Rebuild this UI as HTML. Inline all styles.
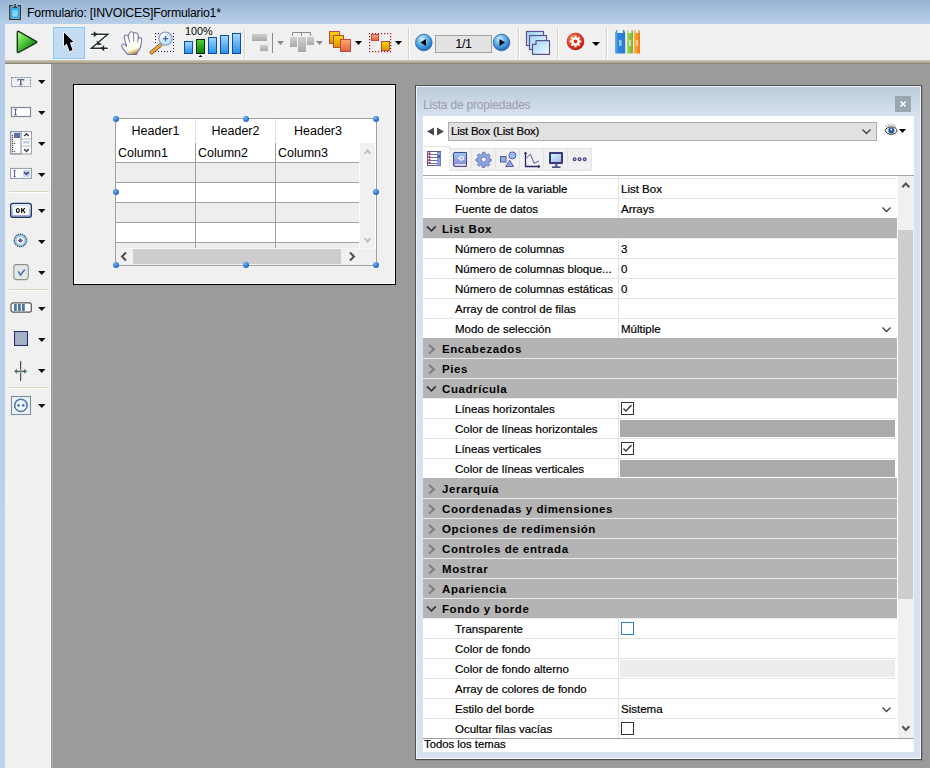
<!DOCTYPE html>
<html><head><meta charset="utf-8">
<style>
*{margin:0;padding:0;box-sizing:border-box}
html,body{width:930px;height:768px;overflow:hidden;background:#9b9b9b;font-family:"Liberation Sans",sans-serif;position:relative}
.a{position:absolute}
#title{left:0;top:0;width:930px;height:24px;background:linear-gradient(#98b3d2,#b8d0ea)}
#lframe{left:0;top:24px;width:5px;height:744px;background:linear-gradient(#b5cde8,#bcd4ee)}
#tb{left:5px;top:24px;width:925px;height:36px;background:#f0f0f0}
#khaki{left:5px;top:59px;width:925px;height:5px;background:linear-gradient(#f3f1ee 0,#f3f1ee 1px,#cbc6b5 1px,#bfbaa8 2px,#b4af9b 3px,#a9a590 4px,#88857a 4px)}
#ltb{left:5px;top:64px;width:46px;height:704px;background:#f0f0f0;border-right:1px solid #f6f6f6}
#lbord{left:51px;top:64px;width:2px;height:704px;background:linear-gradient(90deg,#949494 50%,#acacac 50%)}
.sep{width:2px;background:linear-gradient(90deg,#d9d3bf 50%,#fff 50%)}
.hsep{height:2px;background:linear-gradient(#d9d3bf 50%,#fff 50%)}
.tri{width:0;height:0;border-left:4px solid transparent;border-right:4px solid transparent;border-top:4px solid #000}
.ttxt{font-size:12.3px;letter-spacing:-0.23px;color:#000;white-space:nowrap}
.pn{left:455px;height:19px;line-height:21px;font-size:11.5px;color:#000;white-space:nowrap;-webkit-text-stroke:0.2px #000}
.pv{left:621px;height:19px;line-height:21px;font-size:11.5px;color:#000;white-space:nowrap;-webkit-text-stroke:0.2px #000}
.ph{left:442px;height:19px;line-height:20px;font-size:11.5px;font-weight:bold;letter-spacing:0.58px;color:#000;white-space:nowrap}
.lb{font-size:12.5px;color:#000;white-space:nowrap;line-height:17px}
.hdl{width:6.4px;height:6.4px;border-radius:50%;background:radial-gradient(circle at 35% 30%,#72b6f2,#2a78d4 55%,#174c98)}
</style></head><body>
<div id="title" class="a"></div>
<div class="a ttxt" style="left:27px;top:6px;line-height:14px">Formulario: [INVOICES]Formulario1*</div>
<div id="lframe" class="a"></div>
<div id="tb" class="a"></div>
<div id="khaki" class="a"></div>
<div id="ltb" class="a"></div>
<div id="lbord" class="a"></div>
<!-- TOP TOOLBAR ICONS -->
<svg class="a" style="left:10px;top:26px" width="36" height="32" viewBox="10 26 36 32">
<defs><linearGradient id="gplay" x1="0" y1="0.1" x2="0.8" y2="1"><stop offset="0" stop-color="#a4fc84"/><stop offset="0.4" stop-color="#5ad040"/><stop offset="0.75" stop-color="#1f9420"/><stop offset="1" stop-color="#0b5e0e"/></linearGradient></defs>
<path d="M18.6 31.4 Q17.3 30.8 17.3 32.4 L17.3 51.4 Q17.3 53 18.7 52.3 L36.2 42.8 Q37.4 42 36.2 41.3 Z" fill="url(#gplay)" stroke="#173a17" stroke-width="1.4" stroke-linejoin="round"/>
</svg>
<div class="a" style="left:53px;top:27px;width:32px;height:32px;background:#c3dcf2;border:1px solid #90c6f4"></div>
<svg class="a" style="left:53px;top:27px" width="32" height="32" viewBox="53 27 32 32">
<path d="M64 32.6 L64 46 L66.7 43.8 L69.5 51.3 L72.6 50.1 L69.9 42.8 L73.3 41.7 Z" fill="#fff" stroke="#fff" stroke-width="1.6" stroke-linejoin="round" opacity="0.9"/><path d="M64 32.6 L64 46 L66.7 43.8 L69.5 51.3 L72.6 50.1 L69.9 42.8 L73.3 41.7 Z" fill="#000"/>
</svg>
<svg class="a" style="left:86px;top:28px" width="26" height="26" viewBox="86 28 26 26">
<g stroke="#fff" stroke-width="3.4" fill="none" stroke-linecap="round" opacity="0.95"><path d="M91.2 34.3 L107.8 34.3 L91.4 48.3 L107.8 48.3"/></g>
<g stroke="#263030" stroke-width="1.5" fill="none"><path d="M91.2 34.3 L107.8 34.3 L91.4 48.3 L107.8 48.3"/></g>
<path d="M93.8 31.3 L97.8 34.3 L93.8 37.3 Z M104.2 45.3 L100.2 48.3 L104.2 51.3 Z M96.6 40.6 L97.6 45.2 L102 44.4 Z" fill="#263030"/>
</svg>
<svg class="a" style="left:114px;top:28px" width="30" height="30" viewBox="114 28 30 30">
<defs><linearGradient id="ghand" x1="0.45" y1="0.5" x2="0.6" y2="1"><stop offset="0" stop-color="#fffff2"/><stop offset="0.55" stop-color="#fdfbea"/><stop offset="0.85" stop-color="#d2ae60"/><stop offset="1" stop-color="#94681c"/></linearGradient></defs>
<path d="M127.6 54.4 Q124.5 51 122.2 47.6 Q121 45.6 122.3 44.4 Q123.8 43.4 125.2 44.7 L126.6 46.4 L124.2 37.6 Q123.9 35.4 125.8 35 Q127.6 34.8 128.2 36.4 L129.3 33.2 Q130.2 31.6 131.6 31.7 Q133.2 31.9 133.6 33.2 Q134.6 32.6 136.4 33 Q138.2 33.6 138.3 35.6 L138.5 38.6 Q139.4 37.4 140.8 37.8 Q141.9 38.4 141.7 40 L140.8 46 Q139.6 50.2 137.2 52.4 L136.8 54.4 Z" fill="url(#ghand)" stroke="#7472b4" stroke-width="1.05" stroke-linejoin="round"/>
<path d="M128.2 36.4 L129.8 42.6 M133.6 33.2 L133.8 41.6 M138.4 36 L137.6 42.6" fill="none" stroke="#7472b4" stroke-width="1"/>
</svg>
<svg class="a" style="left:146px;top:28px" width="30" height="30" viewBox="146 28 30 30">
<g fill="#1c1c52"><rect x="155" y="33" width="1" height="1"/><rect x="158" y="33" width="1" height="1"/><rect x="173" y="33" width="1" height="1"/><rect x="155" y="36" width="1" height="1"/><rect x="155" y="39" width="1" height="1"/><rect x="155" y="42" width="1" height="1"/><rect x="173" y="36" width="1" height="1"/><rect x="173" y="39" width="1" height="1"/><rect x="173" y="42" width="1" height="1"/><rect x="173" y="45" width="1" height="1"/><rect x="173" y="48" width="1" height="1"/><rect x="173" y="51" width="1" height="1"/><rect x="155" y="51" width="1" height="1"/><rect x="158" y="51" width="1" height="1"/><rect x="161" y="51" width="1" height="1"/><rect x="164" y="51" width="1" height="1"/><rect x="167" y="51" width="1" height="1"/><rect x="170" y="51" width="1" height="1"/></g>
<defs><radialGradient id="glens" cx="0.35" cy="0.3" r="0.8"><stop offset="0" stop-color="#ffffff"/><stop offset="0.5" stop-color="#cdeefe"/><stop offset="1" stop-color="#a8d8f4"/></radialGradient></defs>
<path d="M151.5 52.5 L160.5 45" stroke="#5a4a30" stroke-width="3.6" stroke-linecap="round"/>
<path d="M151.5 52.5 L160.5 45" stroke="#f5a332" stroke-width="2.6" stroke-linecap="round"/>
<circle cx="165.5" cy="38.6" r="6.6" fill="url(#glens)" stroke="#8a92c8" stroke-width="1.1"/>
<path d="M165.5 36 L165.5 41.2 M162.9 38.6 L168.1 38.6" stroke="#5a5a8e" stroke-width="1.3"/>
</svg>
<svg class="a" style="left:180px;top:25px" width="65" height="35" viewBox="180 25 65 35">
<defs><linearGradient id="gbar" x1="0" y1="0" x2="0" y2="1"><stop offset="0" stop-color="#a8d8ff"/><stop offset="1" stop-color="#2090ea"/></linearGradient>
<linearGradient id="gbarg" x1="0" y1="0" x2="0" y2="1"><stop offset="0" stop-color="#50d830"/><stop offset="1" stop-color="#0a7a10"/></linearGradient></defs>
<g stroke="#0b4fa8" stroke-width="1" fill="url(#gbar)">
<rect x="184.5" y="41.5" width="8" height="12"/><rect x="208.5" y="37.5" width="8" height="16"/><rect x="220.5" y="35.5" width="8" height="18"/><rect x="232.5" y="33.5" width="8" height="20"/></g>
<rect x="196.5" y="39.5" width="8" height="14" fill="url(#gbarg)" stroke="#0a2a0a"/>
<path d="M198.5 57 L200.5 55 L202.5 57 Z" fill="#000"/>
</svg>
<div class="a" style="left:185px;top:25px;font-size:10.8px;line-height:12px;color:#000">100%</div>
<div class="a sep" style="left:244px;top:28px;height:31px"></div>
<!-- align icons grayed -->
<svg class="a" style="left:248px;top:28px" width="80" height="30" viewBox="248 28 80 30">
<defs><linearGradient id="ggr" x1="0" y1="0" x2="0" y2="1"><stop offset="0" stop-color="#cfcfcf"/><stop offset="1" stop-color="#a9a9a9"/></linearGradient></defs>
<rect x="252" y="34" width="15" height="7" fill="url(#ggr)"/>
<rect x="260" y="45" width="8" height="6" fill="url(#ggr)"/>
<rect x="272" y="33" width="1" height="20" fill="#8a8a8a"/>
<path d="M277 41 L284 41 L280.5 45 Z" fill="#8a8a8a"/>
<path d="M292.5 36 L292.5 32.5 L310.5 32.5 L310.5 36 M301.5 32.5 L301.5 36" fill="none" stroke="#8a8a8a" stroke-width="1"/>
<rect x="290" y="37" width="7" height="10" fill="url(#ggr)"/>
<rect x="298" y="37" width="8" height="15" fill="url(#ggr)"/>
<rect x="307" y="37" width="7" height="8" fill="url(#ggr)"/>
<path d="M316 41 L323 41 L319.5 45 Z" fill="#8a8a8a"/>
</svg>
<svg class="a" style="left:325px;top:26px" width="85" height="32" viewBox="325 26 85 32">
<defs><linearGradient id="gyel" x1="0" y1="0" x2="0" y2="1"><stop offset="0" stop-color="#f8d800"/><stop offset="1" stop-color="#d89400"/></linearGradient>
<linearGradient id="gsal" x1="0" y1="0" x2="0" y2="1"><stop offset="0" stop-color="#fcaa78"/><stop offset="1" stop-color="#e0603a"/></linearGradient></defs>
<rect x="329.5" y="31.5" width="10" height="12" fill="url(#gyel)" stroke="#c04848" stroke-width="1"/>
<rect x="333.5" y="35.5" width="10" height="12" fill="url(#gyel)" stroke="#c04848" stroke-width="1"/>
<rect x="340.5" y="39.5" width="10" height="12" fill="url(#gsal)" stroke="#c04848" stroke-width="1"/>
<path d="M355 41 L362 41 L358.5 45 Z" fill="#000"/>
<g fill="#a01818"><rect x="369" y="33" width="1.2" height="1.2"/><rect x="372" y="33" width="1.2" height="1.2"/><rect x="375" y="33" width="1.2" height="1.2"/><rect x="378" y="33" width="1.2" height="1.2"/><rect x="381" y="33" width="1.2" height="1.2"/><rect x="384" y="33" width="1.2" height="1.2"/><rect x="387" y="33" width="1.2" height="1.2"/><rect x="390" y="33" width="1.2" height="1.2"/><rect x="369" y="36" width="1.2" height="1.2"/><rect x="369" y="39" width="1.2" height="1.2"/><rect x="369" y="42" width="1.2" height="1.2"/><rect x="369" y="45" width="1.2" height="1.2"/><rect x="369" y="48" width="1.2" height="1.2"/><rect x="369" y="51" width="1.2" height="1.2"/><rect x="372" y="51" width="1.2" height="1.2"/><rect x="375" y="51" width="1.2" height="1.2"/><rect x="378" y="51" width="1.2" height="1.2"/><rect x="390" y="36" width="1.2" height="1.2"/><rect x="390" y="39" width="1.2" height="1.2"/><rect x="390" y="42" width="1.2" height="1.2"/><rect x="390" y="45" width="1.2" height="1.2"/><rect x="390" y="48" width="1.2" height="1.2"/><rect x="390" y="51" width="1.2" height="1.2"/><rect x="381" y="51" width="1.2" height="1.2"/><rect x="384" y="51" width="1.2" height="1.2"/><rect x="387" y="51" width="1.2" height="1.2"/></g>
<rect x="371.5" y="34.5" width="7" height="6" fill="url(#gsal)" stroke="#c04848" stroke-width="1"/>
<rect x="381.5" y="41.5" width="8" height="9" fill="url(#gyel)" stroke="#c04848" stroke-width="1"/>
<path d="M395 41 L402 41 L398.5 45 Z" fill="#000"/>
</svg>
<div class="a sep" style="left:408px;top:28px;height:31px"></div>
<svg class="a" style="left:412px;top:30px" width="102" height="26" viewBox="412 30 102 26">
<defs><radialGradient id="gnav" cx="0.4" cy="0.3" r="0.75"><stop offset="0" stop-color="#d8f0ff"/><stop offset="0.45" stop-color="#5cb0ec"/><stop offset="1" stop-color="#1660b8"/></radialGradient></defs>
<circle cx="423.8" cy="42.5" r="8.3" fill="url(#gnav)" stroke="#2a5a9a" stroke-width="0.8"/>
<path d="M420.5 42.5 L426 39 L426 46 Z" fill="#000"/>
<circle cx="501.5" cy="42.5" r="8.3" fill="url(#gnav)" stroke="#2a5a9a" stroke-width="0.8"/>
<path d="M505 42.5 L499.5 39 L499.5 46 Z" fill="#000"/>
</svg>
<div class="a" style="left:435px;top:35px;width:57px;height:18px;background:#e2e2e2;border:1px solid #a0a0a0"></div>
<div class="a" style="left:435px;top:35px;width:57px;height:18px;font-size:12.6px;letter-spacing:-0.3px;line-height:18px;text-align:center;color:#000">1/1</div>
<div class="a sep" style="left:518px;top:28px;height:31px"></div>
<svg class="a" style="left:520px;top:26px" width="36" height="32" viewBox="520 26 36 32">
<defs><linearGradient id="gpg" x1="0" y1="0" x2="1" y2="1"><stop offset="0" stop-color="#a0d4f0"/><stop offset="1" stop-color="#f0fcff"/></linearGradient></defs>
<rect x="526.5" y="31.5" width="17" height="14" fill="url(#gpg)" stroke="#5a5294" stroke-width="1.2"/>
<rect x="529.5" y="35.5" width="17" height="14" fill="url(#gpg)" stroke="#5a5294" stroke-width="1.2"/>
<path d="M532.5 44.3 L536 44.3 L536 40.7 L549.5 40.7 L549.5 54.3 L532.5 54.3 Z" fill="url(#gpg)" stroke="#5a5294" stroke-width="1.2" stroke-linejoin="round"/>
</svg>
<div class="a sep" style="left:557px;top:28px;height:31px"></div>
<svg class="a" style="left:562px;top:28px" width="28" height="28" viewBox="562 28 28 28">
<defs><radialGradient id="gred" cx="0.35" cy="0.3" r="0.8"><stop offset="0" stop-color="#ff8a50"/><stop offset="0.6" stop-color="#e23a1a"/><stop offset="1" stop-color="#b80c0c"/></radialGradient></defs>
<circle cx="575.5" cy="41.5" r="8.4" fill="url(#gred)" stroke="#a01010" stroke-width="0.6"/>
<g fill="#fff" transform="translate(575.5 41.5)">
<circle r="4.2"/>
<rect x="-1" y="-5.8" width="2" height="11.6"/><rect x="-5.8" y="-1" width="11.6" height="2"/>
<rect x="-1" y="-5.8" width="2" height="11.6" transform="rotate(45)"/><rect x="-5.8" y="-1" width="11.6" height="2" transform="rotate(45)"/>
</g>
<circle cx="575.5" cy="41.5" r="1.9" fill="#d83a1c"/>
</svg>
<path/>
<div class="a tri" style="left:592px;top:42px"></div>
<div class="a sep" style="left:606px;top:28px;height:31px"></div>
<svg class="a" style="left:612px;top:28px" width="32" height="28" viewBox="612 28 32 28">
<defs><linearGradient id="gbb" x1="0" y1="0" x2="1" y2="0"><stop offset="0" stop-color="#6ab4f4"/><stop offset="0.3" stop-color="#2e84dc"/><stop offset="1" stop-color="#2a78d0"/></linearGradient>
<linearGradient id="gbg" x1="0" y1="0" x2="1" y2="0"><stop offset="0" stop-color="#a8d860"/><stop offset="1" stop-color="#78b030"/></linearGradient>
<linearGradient id="gbo" x1="0" y1="0" x2="1" y2="0"><stop offset="0" stop-color="#ffb050"/><stop offset="1" stop-color="#f27a08"/></linearGradient></defs>
<path d="M615 53.5 L615 33 L616.3 30 L617.3 30 L617.3 33 L623 33 L623 30 L624 30 L625.2 33 L625.2 53.5 Z" fill="url(#gbb)"/>
<path d="M627 53.5 L627 33 L627.5 30 L628.5 30 L628.5 33 L631.5 33 L631.5 30 L632.5 30 L633 33 L633 53.5 Z" fill="url(#gbg)"/>
<path d="M633.8 53.5 L633.8 33 L634.3 30 L635.3 30 L635.3 33 L638.5 33 L638.5 30 L639.5 30 L640 33 L640 53.5 Z" fill="url(#gbo)"/>
<g fill="#fff" opacity="0.55"><rect x="619" y="40" width="2.5" height="6"/><rect x="629" y="40" width="2" height="6"/><rect x="636" y="40" width="2" height="6"/></g>
</svg>


<!-- FORM -->
<div class="a" style="left:73px;top:84px;width:323px;height:201px;border:1px solid #000;background:#f0f0f0;box-shadow:inset 1px 1px 0 #fff,inset -1px -1px 0 #fff"></div>
<!-- LISTBOX -->
<div class="a" style="left:115px;top:118px;width:262px;height:148px;border:1px solid #a0a0a0;background:#fff"></div>
<div class="a" style="left:116px;top:163px;width:243px;height:19px;background:#eeeeee"></div>
<div class="a" style="left:116px;top:203px;width:243px;height:19px;background:#eeeeee"></div>
<div class="a" style="left:116px;top:243px;width:243px;height:5px;background:#eeeeee"></div>
<div class="a" style="left:116px;top:162px;width:243px;height:1px;background:#a0a0a0"></div>
<div class="a" style="left:116px;top:182px;width:243px;height:1px;background:#a0a0a0"></div>
<div class="a" style="left:116px;top:202px;width:243px;height:1px;background:#a0a0a0"></div>
<div class="a" style="left:116px;top:222px;width:243px;height:1px;background:#a0a0a0"></div>
<div class="a" style="left:116px;top:242px;width:243px;height:1px;background:#a0a0a0"></div>
<div class="a" style="left:195px;top:119px;width:1px;height:24px;background:#e3e3e3"></div>
<div class="a" style="left:275px;top:119px;width:1px;height:24px;background:#e3e3e3"></div>
<div class="a" style="left:195px;top:143px;width:1px;height:105px;background:#a0a0a0"></div>
<div class="a" style="left:275px;top:143px;width:1px;height:105px;background:#a0a0a0"></div>
<div class="a" style="left:360px;top:143px;width:15px;height:105px;background:#f0f0f0"></div>
<div class="a" style="left:116px;top:248px;width:260px;height:1px;background:#f8f8f8"></div>
<div class="a" style="left:116px;top:249px;width:260px;height:16px;background:#f0f0f0"></div>
<div class="a" style="left:133px;top:249px;width:208px;height:15px;background:#cdcdcd"></div>
<svg class="a" style="left:119px;top:251px" width="10" height="11"><path d="M7 1.5 L3 5.5 L7 9.5" fill="none" stroke="#4d4d4d" stroke-width="2"/></svg>
<svg class="a" style="left:347px;top:251px" width="10" height="11"><path d="M3 1.5 L7 5.5 L3 9.5" fill="none" stroke="#4d4d4d" stroke-width="2"/></svg>
<svg class="a" style="left:362px;top:146px" width="12" height="10"><path d="M2.6 7.8 L5.5 4.3 L8.4 7.8" fill="none" stroke="#c0c0c0" stroke-width="2"/></svg>
<svg class="a" style="left:362px;top:236px" width="12" height="9"><path d="M2.6 2.2 L5.5 5.7 L8.4 2.2" fill="none" stroke="#c0c0c0" stroke-width="2"/></svg>
<div class="a lb" style="left:116px;top:123px;width:79px;text-align:center">Header1</div>
<div class="a lb" style="left:196px;top:123px;width:79px;text-align:center">Header2</div>
<div class="a lb" style="left:276px;top:123px;width:84px;text-align:center">Header3</div>
<div class="a lb" style="left:118px;top:145px">Column1</div>
<div class="a lb" style="left:198px;top:145px">Column2</div>
<div class="a lb" style="left:278px;top:145px">Column3</div>
<div class="a hdl" style="left:112.8px;top:115.8px"></div>
<div class="a hdl" style="left:242.8px;top:115.8px"></div>
<div class="a hdl" style="left:372.8px;top:115.8px"></div>
<div class="a hdl" style="left:112.8px;top:188.8px"></div>
<div class="a hdl" style="left:372.8px;top:188.8px"></div>
<div class="a hdl" style="left:112.8px;top:261.8px"></div>
<div class="a hdl" style="left:242.8px;top:261.8px"></div>
<div class="a hdl" style="left:372.8px;top:261.8px"></div>

<!-- PANEL -->
<div class="a" style="left:415px;top:85px;width:507px;height:675px;border:1px solid #505050;background:linear-gradient(#bdcbdb 1px,#d6e2ef 30px,#d6e2ef);box-shadow:inset 1px 1px 0 #eef4fa,inset -1px -1px 0 #f4f8fc,1px 1px 0 #8a8a8a"></div>
<div class="a" style="left:423px;top:116px;width:491px;height:636px;background:#fff"></div>
<div class="a" style="left:423px;top:98px;font-size:12px;letter-spacing:-0.2px;line-height:15px;color:#9d9aae;white-space:nowrap">Lista de propiedades</div>
<div class="a" style="left:895px;top:96px;width:16px;height:16px;background:#9aa6b2"></div>
<svg class="a" style="left:895px;top:96px" width="16" height="16"><path d="M5.5 5.5 L10.5 10.5 M10.5 5.5 L5.5 10.5" stroke="#fff" stroke-width="1.6"/></svg>
<svg class="a" style="left:426px;top:126px" width="20" height="11"><path d="M1 5.5 L8 1.5 L8 9.5 Z M11 1.5 L18 5.5 L11 9.5 Z" fill="#4a4a4a"/></svg>
<div class="a" style="left:448px;top:122px;width:429px;height:19px;border:1px solid #adadad;background:#e1e1e1"></div>
<div class="a" style="left:451px;top:122px;height:19px;line-height:19px;font-size:11.3px;letter-spacing:-0.15px;white-space:nowrap;-webkit-text-stroke:0.2px #000">List Box (List Box)</div>
<svg class="a" style="left:861px;top:128px" width="12" height="8"><path d="M1.5 1.5 L5.5 5.5 L9.5 1.5" fill="none" stroke="#404040" stroke-width="1.3"/></svg>
<!-- tabs -->
<div class="a" style="left:423px;top:146px;width:27px;height:25px;background:#fff;border-top:1px solid #e3e3e3;border-right:1px solid #e3e3e3"></div>
<div class="a" style="left:449px;top:148px;width:143px;height:23px;background:#f0f0f0;border:1px solid #e3e3e3;border-left:none"></div>
<div class="a" style="left:471px;top:148px;width:1px;height:23px;background:#e3e3e3"></div>
<div class="a" style="left:495px;top:148px;width:1px;height:23px;background:#e3e3e3"></div>
<div class="a" style="left:519px;top:148px;width:1px;height:23px;background:#e3e3e3"></div>
<div class="a" style="left:543px;top:148px;width:1px;height:23px;background:#e3e3e3"></div>
<div class="a" style="left:567px;top:148px;width:1px;height:23px;background:#e3e3e3"></div>
<div class="a" style="left:423px;top:175px;width:491px;height:1px;background:#a8a8a8"></div>
<div class="a" style="left:423px;top:178px;width:474px;height:1px;background:#e3e3e3"></div>
<div class="a" style="left:618px;top:176px;width:1px;height:2px;background:#e3e3e3"></div>
<!-- scrollbar -->
<div class="a" style="left:898px;top:176px;width:16px;height:562px;background:#f0f0f0"></div>
<div class="a" style="left:898px;top:230px;width:15px;height:369px;background:#cdcdcd"></div>
<svg class="a" style="left:900px;top:180px" width="12" height="10"><path d="M2.3 7.3 L5.8 3.6 L9.3 7.3" fill="none" stroke="#555" stroke-width="2.1"/></svg>
<svg class="a" style="left:900px;top:723px" width="12" height="10"><path d="M2.3 3.2 L5.8 6.9 L9.3 3.2" fill="none" stroke="#555" stroke-width="2.1"/></svg>
<div class="a" style="left:423px;top:198px;width:474px;height:1px;background:#e3e3e3"></div>
<div class="a" style="left:618px;top:179px;width:1px;height:19px;background:#e3e3e3"></div>
<div class="a" style="left:423px;top:218px;width:474px;height:1px;background:#e3e3e3"></div>
<div class="a" style="left:618px;top:199px;width:1px;height:19px;background:#e3e3e3"></div>
<div class="a" style="left:423px;top:258px;width:474px;height:1px;background:#e3e3e3"></div>
<div class="a" style="left:618px;top:239px;width:1px;height:19px;background:#e3e3e3"></div>
<div class="a" style="left:423px;top:278px;width:474px;height:1px;background:#e3e3e3"></div>
<div class="a" style="left:618px;top:259px;width:1px;height:19px;background:#e3e3e3"></div>
<div class="a" style="left:423px;top:298px;width:474px;height:1px;background:#e3e3e3"></div>
<div class="a" style="left:618px;top:279px;width:1px;height:19px;background:#e3e3e3"></div>
<div class="a" style="left:423px;top:318px;width:474px;height:1px;background:#e3e3e3"></div>
<div class="a" style="left:618px;top:299px;width:1px;height:19px;background:#e3e3e3"></div>
<div class="a" style="left:423px;top:338px;width:474px;height:1px;background:#e3e3e3"></div>
<div class="a" style="left:618px;top:319px;width:1px;height:19px;background:#e3e3e3"></div>
<div class="a" style="left:423px;top:418px;width:474px;height:1px;background:#e3e3e3"></div>
<div class="a" style="left:618px;top:399px;width:1px;height:19px;background:#e3e3e3"></div>
<div class="a" style="left:423px;top:438px;width:474px;height:1px;background:#e3e3e3"></div>
<div class="a" style="left:618px;top:419px;width:1px;height:19px;background:#e3e3e3"></div>
<div class="a" style="left:423px;top:458px;width:474px;height:1px;background:#e3e3e3"></div>
<div class="a" style="left:618px;top:439px;width:1px;height:19px;background:#e3e3e3"></div>
<div class="a" style="left:423px;top:478px;width:474px;height:1px;background:#e3e3e3"></div>
<div class="a" style="left:618px;top:459px;width:1px;height:19px;background:#e3e3e3"></div>
<div class="a" style="left:423px;top:638px;width:474px;height:1px;background:#e3e3e3"></div>
<div class="a" style="left:618px;top:619px;width:1px;height:19px;background:#e3e3e3"></div>
<div class="a" style="left:423px;top:658px;width:474px;height:1px;background:#e3e3e3"></div>
<div class="a" style="left:618px;top:639px;width:1px;height:19px;background:#e3e3e3"></div>
<div class="a" style="left:423px;top:678px;width:474px;height:1px;background:#e3e3e3"></div>
<div class="a" style="left:618px;top:659px;width:1px;height:19px;background:#e3e3e3"></div>
<div class="a" style="left:423px;top:698px;width:474px;height:1px;background:#e3e3e3"></div>
<div class="a" style="left:618px;top:679px;width:1px;height:19px;background:#e3e3e3"></div>
<div class="a" style="left:423px;top:718px;width:474px;height:1px;background:#e3e3e3"></div>
<div class="a" style="left:618px;top:699px;width:1px;height:19px;background:#e3e3e3"></div>
<div class="a" style="left:618px;top:719px;width:1px;height:19px;background:#e3e3e3"></div>
<div class="a" style="left:423px;top:218px;width:474px;height:20px;background:#b4b4b4"></div>
<div class="a" style="left:423px;top:338px;width:474px;height:20px;background:#b4b4b4"></div>
<div class="a" style="left:423px;top:358px;width:474px;height:20px;background:#b4b4b4"></div>
<div class="a" style="left:423px;top:378px;width:474px;height:20px;background:#b4b4b4"></div>
<div class="a" style="left:423px;top:478px;width:474px;height:20px;background:#b4b4b4"></div>
<div class="a" style="left:423px;top:498px;width:474px;height:20px;background:#b4b4b4"></div>
<div class="a" style="left:423px;top:518px;width:474px;height:20px;background:#b4b4b4"></div>
<div class="a" style="left:423px;top:538px;width:474px;height:20px;background:#b4b4b4"></div>
<div class="a" style="left:423px;top:558px;width:474px;height:20px;background:#b4b4b4"></div>
<div class="a" style="left:423px;top:578px;width:474px;height:20px;background:#b4b4b4"></div>
<div class="a" style="left:423px;top:598px;width:474px;height:20px;background:#b4b4b4"></div>
<div class="a" style="left:423px;top:238px;width:474px;height:1px;background:#ebebeb"></div>
<div class="a" style="left:423px;top:358px;width:474px;height:1px;background:#ebebeb"></div>
<div class="a" style="left:423px;top:378px;width:474px;height:1px;background:#ebebeb"></div>
<div class="a" style="left:423px;top:398px;width:474px;height:1px;background:#ebebeb"></div>
<div class="a" style="left:423px;top:498px;width:474px;height:1px;background:#ebebeb"></div>
<div class="a" style="left:423px;top:518px;width:474px;height:1px;background:#ebebeb"></div>
<div class="a" style="left:423px;top:538px;width:474px;height:1px;background:#ebebeb"></div>
<div class="a" style="left:423px;top:558px;width:474px;height:1px;background:#ebebeb"></div>
<div class="a" style="left:423px;top:578px;width:474px;height:1px;background:#ebebeb"></div>
<div class="a" style="left:423px;top:598px;width:474px;height:1px;background:#ebebeb"></div>
<div class="a" style="left:423px;top:618px;width:474px;height:1px;background:#ebebeb"></div>
<div class="a pn" style="top:179px">Nombre de la variable</div>
<div class="a pv" style="top:179px">List Box</div>
<div class="a pn" style="top:199px">Fuente de datos</div>
<div class="a pv" style="top:199px">Arrays</div>
<div class="a ph" style="top:219px">List Box</div>
<div class="a pn" style="top:239px">Número de columnas</div>
<div class="a pv" style="top:239px">3</div>
<div class="a pn" style="top:259px">Número de columnas bloque...</div>
<div class="a pv" style="top:259px">0</div>
<div class="a pn" style="top:279px">Número de columnas estáticas</div>
<div class="a pv" style="top:279px">0</div>
<div class="a pn" style="top:299px">Array de control de filas</div>
<div class="a pn" style="top:319px">Modo de selección</div>
<div class="a pv" style="top:319px">Múltiple</div>
<div class="a ph" style="top:339px">Encabezados</div>
<div class="a ph" style="top:359px">Pies</div>
<div class="a ph" style="top:379px">Cuadrícula</div>
<div class="a pn" style="top:399px">Líneas horizontales</div>
<div class="a pn" style="top:419px">Color de líneas horizontales</div>
<div class="a pn" style="top:439px">Líneas verticales</div>
<div class="a pn" style="top:459px">Color de líneas verticales</div>
<div class="a ph" style="top:479px">Jerarquía</div>
<div class="a ph" style="top:499px">Coordenadas y dimensiones</div>
<div class="a ph" style="top:519px">Opciones de redimensión</div>
<div class="a ph" style="top:539px">Controles de entrada</div>
<div class="a ph" style="top:559px">Mostrar</div>
<div class="a ph" style="top:579px">Apariencia</div>
<div class="a ph" style="top:599px">Fondo y borde</div>
<div class="a pn" style="top:619px">Transparente</div>
<div class="a pn" style="top:639px">Color de fondo</div>
<div class="a pn" style="top:659px">Color de fondo alterno</div>
<div class="a pn" style="top:679px">Array de colores de fondo</div>
<div class="a pn" style="top:699px">Estilo del borde</div>
<div class="a pv" style="top:699px">Sistema</div>
<div class="a pn" style="top:719px">Ocultar filas vacías</div>
<svg class="a" style="left:881px;top:206px" width="11" height="8"><path d="M1.5 1.5 L5.5 5.5 L9.5 1.5" fill="none" stroke="#404040" stroke-width="1.3"/></svg>
<svg class="a" style="left:425px;top:223px" width="14" height="10"><path d="M2 3.4 L6.4 7.8 L10.8 3.4" fill="none" stroke="#333" stroke-width="1.7"/></svg>
<svg class="a" style="left:881px;top:326px" width="11" height="8"><path d="M1.5 1.5 L5.5 5.5 L9.5 1.5" fill="none" stroke="#404040" stroke-width="1.3"/></svg>
<svg class="a" style="left:426px;top:342px" width="12" height="14"><path d="M3 3 L8 7.3 L3 11.6" fill="none" stroke="#7a7a7a" stroke-width="1.8"/></svg>
<svg class="a" style="left:426px;top:362px" width="12" height="14"><path d="M3 3 L8 7.3 L3 11.6" fill="none" stroke="#7a7a7a" stroke-width="1.8"/></svg>
<svg class="a" style="left:425px;top:383px" width="14" height="10"><path d="M2 3.4 L6.4 7.8 L10.8 3.4" fill="none" stroke="#333" stroke-width="1.7"/></svg>
<div class="a" style="left:621px;top:402px;width:13px;height:13px;border:1px solid #333;background:#fff"></div>
<svg class="a" style="left:621px;top:402px" width="13" height="13"><path d="M2.5 6.5 L5 9 L10.5 3" fill="none" stroke="#333" stroke-width="1.3"/></svg>
<div class="a" style="left:620px;top:420px;width:275px;height:17px;background:#aaaaaa"></div>
<div class="a" style="left:621px;top:442px;width:13px;height:13px;border:1px solid #333;background:#fff"></div>
<svg class="a" style="left:621px;top:442px" width="13" height="13"><path d="M2.5 6.5 L5 9 L10.5 3" fill="none" stroke="#333" stroke-width="1.3"/></svg>
<div class="a" style="left:620px;top:460px;width:275px;height:17px;background:#aaaaaa"></div>
<svg class="a" style="left:426px;top:482px" width="12" height="14"><path d="M3 3 L8 7.3 L3 11.6" fill="none" stroke="#7a7a7a" stroke-width="1.8"/></svg>
<svg class="a" style="left:426px;top:502px" width="12" height="14"><path d="M3 3 L8 7.3 L3 11.6" fill="none" stroke="#7a7a7a" stroke-width="1.8"/></svg>
<svg class="a" style="left:426px;top:522px" width="12" height="14"><path d="M3 3 L8 7.3 L3 11.6" fill="none" stroke="#7a7a7a" stroke-width="1.8"/></svg>
<svg class="a" style="left:426px;top:542px" width="12" height="14"><path d="M3 3 L8 7.3 L3 11.6" fill="none" stroke="#7a7a7a" stroke-width="1.8"/></svg>
<svg class="a" style="left:426px;top:562px" width="12" height="14"><path d="M3 3 L8 7.3 L3 11.6" fill="none" stroke="#7a7a7a" stroke-width="1.8"/></svg>
<svg class="a" style="left:426px;top:582px" width="12" height="14"><path d="M3 3 L8 7.3 L3 11.6" fill="none" stroke="#7a7a7a" stroke-width="1.8"/></svg>
<svg class="a" style="left:425px;top:603px" width="14" height="10"><path d="M2 3.4 L6.4 7.8 L10.8 3.4" fill="none" stroke="#333" stroke-width="1.7"/></svg>
<div class="a" style="left:621px;top:622px;width:13px;height:13px;border:1px solid #2f7bd1;background:#fff"></div>
<div class="a" style="left:620px;top:660px;width:275px;height:17px;background:#ececec"></div>
<svg class="a" style="left:881px;top:706px" width="11" height="8"><path d="M1.5 1.5 L5.5 5.5 L9.5 1.5" fill="none" stroke="#404040" stroke-width="1.3"/></svg>
<div class="a" style="left:621px;top:722px;width:13px;height:13px;border:1px solid #333;background:#fff"></div>
<!-- TITLE ICON -->
<svg class="a" style="left:6px;top:2px" width="18" height="20" viewBox="6 2 18 20">
<rect x="11" y="7" width="8" height="11" fill="#2aaee8"/>
<rect x="12.3" y="10" width="5.4" height="6.6" fill="#76d2fa"/>
<path d="M13 14 L14.6 15.6 L17.2 12.6" fill="none" stroke="#d8f4ff" stroke-width="0.8" stroke-dasharray="0.8 0.6"/>
<path d="M12.6 5.6 L9.8 5.6 L9.8 19.3 L20.3 19.3 L20.3 5.6 L17.4 5.6" fill="none" stroke="#333" stroke-width="1.3"/>
<rect x="14.4" y="4" width="1.4" height="3.2" fill="#333"/><rect x="13" y="6.6" width="4.2" height="1.2" fill="#333"/>
</svg>
<!-- LEFT TOOLBAR -->
<svg class="a" style="left:6px;top:70px" width="44" height="350" viewBox="6 70 44 350">
<defs>
<linearGradient id="gok" x1="0" y1="0" x2="0" y2="1"><stop offset="0" stop-color="#e4eefa"/><stop offset="1" stop-color="#9ea6da"/></linearGradient>
</defs>
<!-- triangles -->
<g fill="#111">
<path d="M38 80 L45.5 80 L41.75 84 Z"/>
<path d="M38 111 L45.5 111 L41.75 115 Z"/>
<path d="M38 142 L45.5 142 L41.75 146 Z"/>
<path d="M38 173 L45.5 173 L41.75 177 Z"/>
<path d="M38 209 L45.5 209 L41.75 213 Z"/>
<path d="M38 240 L45.5 240 L41.75 244 Z"/>
<path d="M38 271 L45.5 271 L41.75 275 Z"/>
<path d="M38 307 L45.5 307 L41.75 311 Z"/>
<path d="M38 338 L45.5 338 L41.75 342 Z"/>
<path d="M38 369 L45.5 369 L41.75 373 Z"/>
<path d="M38 404 L45.5 404 L41.75 408 Z"/>
</g>
<!-- T label -->
<rect x="11.5" y="77.5" width="19" height="9" fill="none" stroke="#7a8aa0" stroke-width="1" stroke-dasharray="2 1"/>
<path d="M17.4 79 L24.2 79 L24.2 81.2 L23.5 81.2 L23.2 80 L21.6 80 L21.6 84.4 L22.6 84.6 L22.6 85.3 L19 85.3 L19 84.6 L20 84.4 L20 80 L18.4 80 L18.1 81.2 L17.4 81.2 Z" fill="#5a6c9c"/>
<!-- input -->
<rect x="11.5" y="107.5" width="19" height="9" fill="#fff" stroke="#7a8898" stroke-width="1.2"/>
<path d="M14 109.3 L17 109.3 M15.5 109.3 L15.5 114.8 M14 114.8 L17 114.8" stroke="#4a66ae" stroke-width="1"/>
<!-- listbox -->
<rect x="10.5" y="131.5" width="21" height="22.5" fill="#f4f4f4" stroke="#a0a4a8" stroke-width="1"/>
<rect x="10.8" y="131.8" width="10.2" height="22" fill="#fff" stroke="#7a8a9c" stroke-width="1"/>
<rect x="14" y="133" width="6" height="5" fill="#5a72a8"/>
<g fill="#505050"><circle cx="12.5" cy="135.5" r="0.75"/><circle cx="12.5" cy="137.5" r="0.75"/><circle cx="12.5" cy="139.5" r="0.75"/><circle cx="12.5" cy="141.5" r="0.75"/><circle cx="12.5" cy="143.5" r="0.75"/><circle cx="14.5" cy="143.5" r="0.75"/><circle cx="12.5" cy="145.5" r="0.75"/><circle cx="12.5" cy="147.5" r="0.75"/><circle cx="12.5" cy="149.5" r="0.75"/><circle cx="12.5" cy="151.5" r="0.75"/><circle cx="14.5" cy="151.5" r="0.75"/></g>
<rect x="22" y="132.5" width="9" height="5.5" fill="#fff"/><rect x="22" y="140" width="9" height="5" fill="#fff"/><rect x="22" y="147" width="9" height="6" fill="#fff"/>
<rect x="23" y="141" width="7" height="2.5" rx="1" fill="#c4cce4"/>
<rect x="22" y="138.6" width="9" height="0.9" fill="#b8bcc4"/><rect x="22" y="145.6" width="9" height="0.9" fill="#b8bcc4"/><path d="M24.2 136 L26.5 133.9 L28.8 136" fill="none" stroke="#3a4a6e" stroke-width="1.6"/>
<path d="M24.2 149.2 L26.5 151.3 L28.8 149.2" fill="none" stroke="#3a4a6e" stroke-width="1.6"/>
<!-- combo -->
<rect x="10.6" y="168.4" width="20.8" height="10" fill="#fff" stroke="#8a98a8" stroke-width="1"/>
<path d="M13.6 170.3 L15.6 170.3 M14.6 170.3 L14.6 176.6 M13.6 176.6 L15.6 176.6" stroke="#3a4a80" stroke-width="0.9"/>
<rect x="23" y="170" width="7" height="7" rx="1" fill="#cdd4ea"/>
<path d="M24.2 172.2 L26.4 174.4 L28.7 172.2" fill="none" stroke="#3a4a80" stroke-width="1.7"/>
</svg>
<div class="a hsep" style="left:9px;top:191px;width:40px"></div>
<svg class="a" style="left:6px;top:195px" width="44" height="225" viewBox="6 195 44 225">
<defs>
<linearGradient id="gok2" x1="0" y1="0" x2="0" y2="1"><stop offset="0" stop-color="#e6f0fc"/><stop offset="1" stop-color="#9aa2d8"/></linearGradient>
<radialGradient id="grad2"><stop offset="0.5" stop-color="#fff"/><stop offset="0.55" stop-color="#8ccbe6"/><stop offset="1" stop-color="#7ab8d8"/></radialGradient>
</defs>
<!-- OK -->
<rect x="10.6" y="203.4" width="20.8" height="14" rx="2.5" fill="url(#gok2)" stroke="#1e3a5a" stroke-width="1.2"/>
<rect x="13" y="206" width="16" height="9" fill="#f6f6f4"/>
<ellipse cx="17.85" cy="210.5" rx="1.45" ry="1.95" fill="none" stroke="#000" stroke-width="1.1"/><path d="M21.7 208.1 L21.7 212.9 M24.9 208.2 L22 210.8 M22.8 210 L25 212.9" fill="none" stroke="#000" stroke-width="1.1"/>
<!-- radio -->
<circle cx="20.4" cy="240.4" r="6.2" fill="#94c8e0" stroke="#2e4866" stroke-width="1.2" stroke-dasharray="1.3 0.7"/>
<circle cx="20.4" cy="240.4" r="4.6" fill="none" stroke="#b6dcec" stroke-width="0.8"/>
<circle cx="20.4" cy="240.4" r="3.5" fill="#fff"/>
<path d="M20.4 237.9 L22.9 240.4 L20.4 242.9 L17.9 240.4 Z" fill="#7a4ca6"/>
<!-- checkbox -->
<rect x="13.8" y="264.6" width="14.5" height="15" rx="2.5" fill="#e6e8e8" stroke="#8e928e" stroke-width="1.1"/>
<path d="M18.2 271.3 L20.5 275 L24.8 269.4" fill="none" stroke="#4a78b0" stroke-width="1.6"/>
</svg>
<div class="a hsep" style="left:9px;top:289px;width:40px"></div>
<svg class="a" style="left:6px;top:295px" width="44" height="125" viewBox="6 295 44 125">
<!-- progress -->
<path d="M12.5 302.8 L30 302.8 L31.3 304.2 L31.3 311 L30 312.2 L12.5 312.2 L11 310.8 L11 304.2 Z" fill="#fff" stroke="#555" stroke-width="1.2"/>
<g fill="#4a78a8"><rect x="14" y="304" width="2.8" height="7"/><rect x="18" y="304" width="2.8" height="7"/><rect x="22" y="304" width="2.8" height="7"/></g>
<!-- rect -->
<rect x="13" y="330" width="16" height="17" fill="#fff" opacity="0.8"/>
<rect x="14.5" y="331.5" width="13" height="14" fill="#a4b2c6" stroke="#2a2a6e" stroke-width="1.1"/>
<!-- splitter -->
<rect x="20" y="361" width="1.2" height="20" fill="#505050"/>
<path d="M13.8 371.3 L17.2 368.2 L17.2 370.2 L24 370.2 L24 368.2 L27.4 371.3 L24 374.4 L24 372.4 L17.2 372.4 L17.2 374.4 Z" fill="#56686a" stroke="#fff" stroke-width="0.6" stroke-linejoin="round"/>
</svg>
<div class="a hsep" style="left:9px;top:387px;width:40px"></div>
<svg class="a" style="left:6px;top:392px" width="44" height="28" viewBox="6 392 44 28">
<rect x="11.5" y="396.5" width="19" height="18" fill="#eef2f6" stroke="#8090a0" stroke-width="1.1"/>
<circle cx="20.9" cy="405.4" r="6.2" fill="none" stroke="#4a78a8" stroke-width="1.5"/>
<circle cx="18.5" cy="405.4" r="1.3" fill="#4a78a8"/><circle cx="23.3" cy="405.4" r="1.3" fill="#4a78a8"/>
</svg>
<!-- EYE -->
<svg class="a" style="left:880px;top:120px" width="30" height="20" viewBox="880 120 30 20">
<path d="M886 125 L886.5 127 M888 124 L888.3 126.5 M890 123.5 L890 126 M892 123.5 L892 126 M894 124 L893.7 126.5 M896 125 L895.5 127" stroke="#999" stroke-width="0.7"/>
<ellipse cx="891.2" cy="130.6" rx="5.8" ry="3.7" fill="#f4ecdc" stroke="#333" stroke-width="1"/>
<circle cx="891.3" cy="130.6" r="3" fill="#1a58b0"/>
<circle cx="891.3" cy="129.5" r="0.9" fill="#fff"/>
<path d="M899 129 L906 129 L902.5 133 Z" fill="#000"/>
</svg>
<!-- TAB ICONS -->
<svg class="a" style="left:424px;top:148px" width="170" height="22" viewBox="424 148 170 22">
<defs>
<linearGradient id="gbook" x1="0" y1="0" x2="0" y2="1"><stop offset="0" stop-color="#98c8f8"/><stop offset="1" stop-color="#8a86d0"/></linearGradient>
<linearGradient id="gmon" x1="0" y1="0" x2="1" y2="1"><stop offset="0" stop-color="#d0f4ff"/><stop offset="1" stop-color="#a8b8e8"/></linearGradient>
</defs>
<!-- list icon -->
<rect x="427.5" y="151.5" width="13" height="14" fill="#fff" stroke="#5a5aa0" stroke-width="1"/>
<g fill="#6a6ab0"><rect x="428" y="154" width="9" height="1"/><rect x="428" y="157" width="9" height="1"/><rect x="428" y="160" width="9" height="1"/><rect x="428" y="163" width="9" height="1"/></g>
<rect x="437" y="152" width="3.5" height="13.5" fill="#8a9ae0"/>
<rect x="437.5" y="155" width="2.5" height="3" fill="#3a6ab8"/>
<g fill="#d01818"><circle cx="429.5" cy="153.3" r="1"/><circle cx="429.5" cy="156.4" r="1"/><circle cx="429.5" cy="159.5" r="1"/><circle cx="429.5" cy="162.6" r="1"/></g>
<!-- book -->
<path d="M454 152.5 L466.5 152.5 L466.5 166.5 L455 166.5 Q453.5 166.5 453.5 165 L453.5 153 Z" fill="url(#gbook)" stroke="#4a4a88" stroke-width="1"/>
<rect x="455" y="164.3" width="11" height="1.2" fill="#fff"/>
<path d="M457.5 158.3 L459.5 158.3" stroke="#fff" stroke-width="1"/>
<circle cx="461.5" cy="158.3" r="1.8" fill="none" stroke="#fff" stroke-width="1.2"/>
<!-- gear -->
<g transform="translate(483.8 160)" fill="#8ca2e2" stroke="#5a68b0" stroke-width="0.8">
<path d="M-1.3 -7.5 L1.3 -7.5 L1.6 -5.4 L3.4 -4.6 L5.1 -5.9 L6.9 -4.1 L5.6 -2.4 L6.3 -0.6 L8 -0.3 L8 2.3 L6 2.6 L5.3 4.4 L6.6 6 L4.8 7.8 L3.1 6.5 L1.3 7.2 L1 9 L-1.6 9 L-1.9 7.1 L-3.7 6.4 L-5.3 7.7 L-7.1 5.9 L-5.8 4.3 L-6.5 2.5 L-8.5 2.2 L-8.5 -0.4 L-6.6 -0.7 L-5.9 -2.5 L-7.2 -4.2 L-5.4 -6 L-3.7 -4.7 L-1.6 -5.4 Z" transform="translate(0 -0.8) scale(0.92)"/>
</g>
<circle cx="483.8" cy="159.6" r="2.6" fill="#f2f2f6" stroke="#5a68b0" stroke-width="0.8"/>
<!-- shapes -->
<rect x="500.5" y="156.5" width="5.5" height="5.5" fill="#90a8e8" stroke="#5a5aa0" stroke-width="1"/>
<circle cx="512.4" cy="155.4" r="3.5" fill="#98c0f8" stroke="#5a5aa0" stroke-width="1"/>
<path d="M505.8 166.5 L509.7 160.2 L513.6 166.5 Z" fill="#90a8e8" stroke="#5a5aa0" stroke-width="1" stroke-linejoin="round"/>
<!-- graph -->
<path d="M525.5 152 L525.5 166.5 L540 166.5" fill="none" stroke="#2a2a6a" stroke-width="1.3"/>
<path d="M523.8 154 L525.5 151.5 L527.2 154 Z M538 164.8 L540.5 166.5 L538 168.2 Z" fill="#2a2a6a"/>
<path d="M525.8 158.3 L530.5 154.2 L534 163.3 L539 161" fill="none" stroke="#5a5aa0" stroke-width="1"/>
<!-- monitor -->
<rect x="549" y="152" width="14" height="12" rx="1" fill="#3a3a7a"/>
<rect x="551" y="154" width="10" height="8" fill="url(#gmon)"/>
<rect x="555" y="164" width="2.5" height="3" fill="#6a6aa8"/>
<rect x="552" y="166.5" width="8.5" height="1.4" fill="#3a3a7a"/>
<!-- dots -->
<g fill="#c8cce4" stroke="#4a4a8c" stroke-width="1.3"><circle cx="574.6" cy="159.3" r="1.4"/><circle cx="579.6" cy="159.3" r="1.4"/><circle cx="584.7" cy="159.3" r="1.4"/></g>
</svg>

<div class="a" style="left:423px;top:738px;width:491px;height:1px;background:#a0a0a0"></div>
<div class="a" style="left:424px;top:737px;height:14px;line-height:14px;font-size:11.3px;white-space:nowrap;-webkit-text-stroke:0.2px #000">Todos los temas</div>

</body></html>
